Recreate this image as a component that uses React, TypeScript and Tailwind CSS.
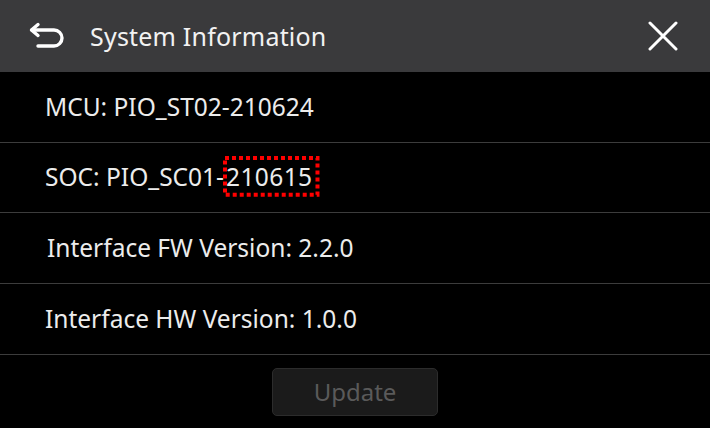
import React from 'react';

const rows = [
  { label: 'MCU: PIO_ST02-210624', h: 'h-[71px]' },
  { label: 'SOC: PIO_SC01-', mark: '210615', h: 'h-[70px]' },
  { label: 'Interface FW Version: 2.2.0', h: 'h-[71px]', pad: 'pl-[47px]' },
  { label: 'Interface HW Version: 1.0.0', h: 'h-[71px]' },
];

const BackIcon = () => (
  <svg width="36" height="28" viewBox="0 0 36 28" fill="none" stroke="white" strokeWidth="3.4" strokeLinecap="round" strokeLinejoin="round">
    <path d="M4 8 L26 8 A8 8 0 0 1 26 24 L10 24" />
    <path d="M10 2.5 L3.5 8 L10 13.5" />
  </svg>
);

const CloseIcon = () => (
  <svg width="30" height="30" viewBox="0 0 30 30" stroke="white" strokeWidth="3" strokeLinecap="round">
    <path d="M2 2 L28 28 M28 2 L2 28" />
  </svg>
);

export default function App() {
  return (
    <div className="w-[710px] h-[428px] bg-black flex flex-col overflow-hidden" style={{ fontFamily: '"Noto Sans", "Open Sans", sans-serif' }}>
      {/* Header */}
      <div className="h-[72px] bg-[#3a3a3c] flex items-center pl-[28px] pr-[32px] shrink-0">
        <BackIcon />
        <span className="ml-[26px] mt-[2px] text-[25px] text-[#f2f2f2] tracking-[0.2px]">System Information</span>
        <button className="ml-auto flex items-center">
          <CloseIcon />
        </button>
      </div>

      {/* Info rows */}
      {rows.map((r) => (
        <div key={r.label} className={`${r.h} ${r.pad ?? 'pl-[45px]'} flex items-center border-b border-[#3c3c3c] shrink-0`}>
          <span className="text-[24.5px] text-[#ececec]">
            {r.label}
            {r.mark && (
              <span className="relative inline-block ml-[2px] tracking-[0.4px]">
                {r.mark}
                <svg className="absolute -left-[3px] -top-[3px] w-[calc(100%+10px)] h-[calc(100%+4px)] overflow-visible" preserveAspectRatio="none">
                  <rect x="2" y="2" width="calc(100% - 4px)" height="calc(100% - 4px)" fill="none" stroke="#ff0000" strokeWidth="4" strokeDasharray="4 3" />
                </svg>
              </span>
            )}
          </span>
        </div>
      ))}

      {/* Footer */}
      <div className="flex justify-center pt-[13px]">
        <button className="w-[166px] h-[48px] rounded-[5px] bg-[#1b1b1b] border border-[#2c2c2c] text-[24px] text-[#5a5a5a]">
          Update
        </button>
      </div>
    </div>
  );
}
